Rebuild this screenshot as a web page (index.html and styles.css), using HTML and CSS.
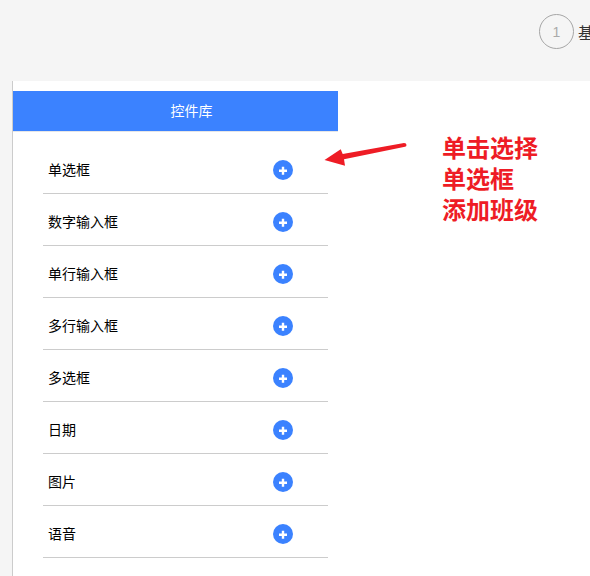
FILE: index.html
```html
<!DOCTYPE html>
<html lang="zh-CN">
<head>
    <meta charset="UTF-8">
    <meta name="viewport" content="width=device-width, initial-scale=1.0">
    <title>控件库</title>
    <link rel="stylesheet" href="styles.css">
</head>
<body>
    <header class="top-bar">
        <div class="step">
            <span class="step-num">1</span>
            <span class="step-name">基本信息</span>
        </div>
    </header>
    <main class="content">
        <section class="library">
            <h2 class="library-title">控件库</h2>
            <ul class="control-list">
                <li><span>单选框</span><svg class="add" viewBox="0 0 20 20"><circle cx="10" cy="10" r="10" fill="#3b82ff"/><path d="M10 6.7v8M6 10.7h8" stroke="#fff" stroke-width="2.4"/></svg></li>
                <li><span>数字输入框</span><svg class="add" viewBox="0 0 20 20"><circle cx="10" cy="10" r="10" fill="#3b82ff"/><path d="M10 6.7v8M6 10.7h8" stroke="#fff" stroke-width="2.4"/></svg></li>
                <li><span>单行输入框</span><svg class="add" viewBox="0 0 20 20"><circle cx="10" cy="10" r="10" fill="#3b82ff"/><path d="M10 6.7v8M6 10.7h8" stroke="#fff" stroke-width="2.4"/></svg></li>
                <li><span>多行输入框</span><svg class="add" viewBox="0 0 20 20"><circle cx="10" cy="10" r="10" fill="#3b82ff"/><path d="M10 6.7v8M6 10.7h8" stroke="#fff" stroke-width="2.4"/></svg></li>
                <li><span>多选框</span><svg class="add" viewBox="0 0 20 20"><circle cx="10" cy="10" r="10" fill="#3b82ff"/><path d="M10 6.7v8M6 10.7h8" stroke="#fff" stroke-width="2.4"/></svg></li>
                <li><span>日期</span><svg class="add" viewBox="0 0 20 20"><circle cx="10" cy="10" r="10" fill="#3b82ff"/><path d="M10 6.7v8M6 10.7h8" stroke="#fff" stroke-width="2.4"/></svg></li>
                <li><span>图片</span><svg class="add" viewBox="0 0 20 20"><circle cx="10" cy="10" r="10" fill="#3b82ff"/><path d="M10 6.7v8M6 10.7h8" stroke="#fff" stroke-width="2.4"/></svg></li>
                <li><span>语音</span><svg class="add" viewBox="0 0 20 20"><circle cx="10" cy="10" r="10" fill="#3b82ff"/><path d="M10 6.7v8M6 10.7h8" stroke="#fff" stroke-width="2.4"/></svg></li>
            </ul>
        </section>
    </main>

    <!-- annotation drawn over the screenshot -->
    <svg class="arrow" viewBox="0 0 84 27"><path d="M0.5 19 L16.7 8.3 L18.7 13 L80 2 Q82.5 2 82.5 4 Q82.5 5.5 81 5.8 L20 18.3 L21 24.7 Z" fill="#ee1c25"/></svg>
    <div class="note">单击选择<br>单选框<br>添加班级</div>
</body>
</html>
```

FILE: styles.css
```css
html, body {
    height: 100%;
}
body {
    margin: 0;
    background-color: #f5f5f5;
    color: #000000;
    font-family: "Liberation Sans", "Noto Sans CJK SC", sans-serif;
    font-size: 14px;
    overflow: hidden;
    position: relative;
}
.top-bar {
    height: 81px;
    display: flex;
    justify-content: flex-start;
    padding: 14px 0 0 539px;
    box-sizing: border-box;
    overflow: hidden;
}
.step {
    display: flex;
    align-items: center;
    height: 35px;
    gap: 4px;
    white-space: nowrap;
}
.step-num {
    width: 35px;
    height: 35px;
    box-sizing: border-box;
    flex: none;
    border: 1px solid #a6a6a6;
    border-radius: 50%;
    display: flex;
    align-items: center;
    justify-content: center;
    color: #aaaaaa;
    font-size: 14px;
}
.step-name {
    font-size: 16px;
    color: #333333;
}
.content {
    height: calc(100% - 81px);
    margin-left: 12px;
    padding-top: 10px;
    box-sizing: border-box;
    background-color: #ffffff;
    border-left: 1px solid #cccccc;
}
.library {
    width: 325px;
}
.library-title {
    margin: 0;
    height: 41px;
    line-height: 40px;
    padding-left: 32px;
    box-sizing: border-box;
    border-bottom: 1px solid #e6e6e6;
    background-color: #3b82ff;
    color: #ffffff;
    font-size: 14px;
    font-weight: normal;
    text-align: center;
}
.control-list {
    list-style: none;
    margin: 10px 0 0 30px;
    padding: 0;
    width: 285px;
}
.control-list li {
    height: 52px;
    box-sizing: border-box;
    padding: 5px 35px 0 5px;
    border-bottom: 1px solid #cccccc;
    display: flex;
    align-items: center;
    justify-content: space-between;
}
.control-list li span {
    padding-bottom: 2px;
}
.add {
    width: 20px;
    height: 20px;
    flex: none;
}
.arrow {
    position: absolute;
    left: 324px;
    top: 141px;
    width: 84px;
    height: 27px;
}
.note {
    position: absolute;
    left: 442px;
    top: 131px;
    color: #ee1c25;
    font-family: "Noto Sans CJK SC", sans-serif;
    font-size: 24px;
    font-weight: bold;
    line-height: 31px;
}
```
